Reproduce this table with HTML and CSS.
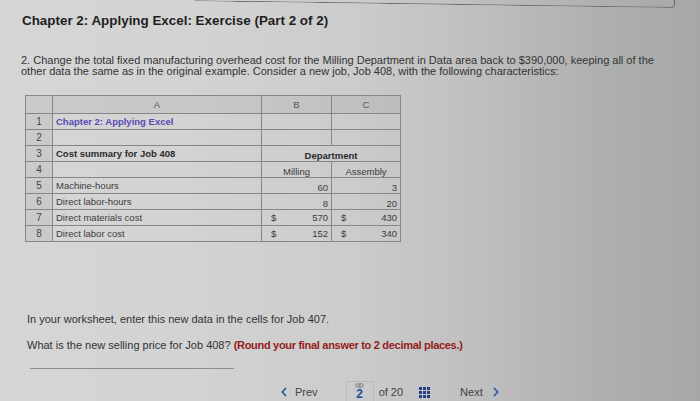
FILE: index.html
```html
<!DOCTYPE html>
<html lang="en">
<head>
<meta charset="utf-8">
<title>Chapter 2: Applying Excel: Exercise (Part 2 of 2)</title>
<link rel="stylesheet" href="styles.css">
</head>
<body>
<div class="page">
  <div class="topbox"></div>
  <h1 class="title">Chapter 2: Applying Excel: Exercise (Part 2 of 2)</h1>
  <p class="intro">2. Change the total fixed manufacturing overhead cost for the Milling Department in Data area back to $390,000, keeping all of the<br>other data the same as in the original example. Consider a new job, Job 408, with the following characteristics:</p>

  <table class="sheet">
    <colgroup>
      <col class="c-num"><col class="c-a"><col class="c-b"><col class="c-c">
    </colgroup>
    <thead>
      <tr class="hdr"><th></th><th>A</th><th>B</th><th>C</th></tr>
    </thead>
    <tbody>
      <tr><td class="rn">1</td><td class="heading">Chapter 2: Applying Excel</td><td></td><td></td></tr>
      <tr><td class="rn">2</td><td></td><td></td><td></td></tr>
      <tr><td class="rn">3</td><td class="bold">Cost summary for Job 408</td><td class="dept" colspan="2">Department</td></tr>
      <tr><td class="rn">4</td><td></td><td class="ctr">Milling</td><td class="ctr">Assembly</td></tr>
      <tr><td class="rn">5</td><td>Machine-hours</td><td class="num">60</td><td class="num">3</td></tr>
      <tr><td class="rn">6</td><td>Direct labor-hours</td><td class="num">8</td><td class="num">20</td></tr>
      <tr><td class="rn">7</td><td>Direct materials cost</td><td><div class="money"><span>$</span><span>570</span></div></td><td><div class="money"><span>$</span><span>430</span></div></td></tr>
      <tr><td class="rn">8</td><td>Direct labor cost</td><td><div class="money"><span>$</span><span>152</span></div></td><td><div class="money"><span>$</span><span>340</span></div></td></tr>
    </tbody>
  </table>

  <p class="note">In your worksheet, enter this new data in the cells for Job 407.</p>
  <p class="question">What is the new selling price for Job 408? <strong class="hint">(Round your final answer to 2 decimal places.)</strong></p>
  <div class="answer"></div>

  <nav class="pager">
    <span class="chev">
      <svg width="6" height="10" viewBox="0 0 6 10"><polyline points="5,1 1.4,5 5,9" fill="none" stroke="#2c5ca6" stroke-width="1.8"/></svg>
    </span>
    <span class="prev">Prev</span>
    <span class="pagebox">
      <svg class="link" width="9" height="5" viewBox="0 0 9 5"><ellipse cx="3" cy="2.5" rx="2.3" ry="1.8" fill="none" stroke="#777" stroke-width="0.9"/><ellipse cx="6" cy="2.5" rx="2.3" ry="1.8" fill="none" stroke="#777" stroke-width="0.9"/></svg>
      <span class="cur">2</span>
    </span>
    <span class="of">of 20</span>
    <span class="grid">
      <svg width="11" height="11" viewBox="0 0 11 11" fill="#253f86">
        <rect x="0" y="0" width="3" height="3"/><rect x="4" y="0" width="3" height="3"/><rect x="8" y="0" width="3" height="3"/>
        <rect x="0" y="4" width="3" height="3"/><rect x="4" y="4" width="3" height="3"/><rect x="8" y="4" width="3" height="3"/>
        <rect x="0" y="8" width="3" height="3"/><rect x="4" y="8" width="3" height="3"/><rect x="8" y="8" width="3" height="3"/>
      </svg>
    </span>
    <span class="next">Next</span>
    <span class="chev">
      <svg width="6" height="10" viewBox="0 0 6 10"><polyline points="1,1 4.6,5 1,9" fill="none" stroke="#2c5ca6" stroke-width="1.8"/></svg>
    </span>
  </nav>
</div>
</body>
</html>
```
FILE: styles.css
```css
* { box-sizing: border-box; }
html, body { margin: 0; padding: 0; }
body {
  width: 700px;
  height: 401px;
  overflow: hidden;
  font-family: "Liberation Sans", Arial, sans-serif;
  color: #303030;
  background: linear-gradient(90deg, #d6d6d6 0%, #d2d2d2 30%, #cccccc 50%, #bebfbe 68%, #aeb0af 86%, #a6a8a7 100%);
}
.page { padding-left: 21px; }

.topbox {
  margin-left: 174px;
  width: 480px;
  height: 8px;
  border-right: 1px solid #666;
  border-bottom: 1px solid #6c6c6c;
  border-bottom-right-radius: 4px;
  transform: rotate(0.8deg);
  transform-origin: 100% 100%;
}

.title {
  margin: 5px 0 0 1px;
  font-size: 13.4px;
  line-height: 16px;
  font-weight: 700;
  color: #1f1f1f;
}

.intro {
  margin: 26px 0 0;
  font-size: 11px;
  line-height: 10.5px;
  color: #333;
}

.sheet {
  margin: 19px 0 0 4px;
  border-collapse: collapse;
  table-layout: fixed;
  width: 375px;
  font-size: 9.5px;
  color: #3b3b3b;
}
.c-num { width: 27px; }
.c-a { width: 209px; }
.c-b { width: 70px; }
.c-c { width: 69px; }
.sheet th, .sheet td {
  border: 1px solid #878787;
  height: 16px;
  padding: 0 3px;
  line-height: 11px;
  white-space: nowrap;
  overflow: hidden;
}
.sheet .hdr th {
  height: 18px;
  font-weight: 400;
  color: #555;
  text-align: center;
  background: rgba(0, 0, 0, 0.05);
}
.sheet .rn {
  text-align: center;
  font-size: 10px;
  color: #444;
  background: rgba(0, 0, 0, 0.05);
}
.sheet .heading { font-weight: 700; color: #5a4cb4; }
.sheet .bold { font-weight: 700; color: #2a2a2a; }
.sheet .dept { font-weight: 700; text-align: center; vertical-align: bottom; color: #2a2a2a; }
.sheet .ctr { text-align: center; vertical-align: bottom; }
.sheet .num { text-align: right; vertical-align: bottom; }
.money { display: flex; justify-content: space-between; padding-left: 6px; }

.note {
  margin: 72px 0 0 6px;
  font-size: 11px;
  line-height: 11px;
  color: #333;
}
.question {
  margin: 15px 0 0 6px;
  font-size: 11px;
  line-height: 11px;
  color: #333;
}
.hint { color: #941c1c; letter-spacing: -0.3px; }

.answer {
  margin: 17px 0 0 9px;
  width: 204px;
  border-top: 1px solid #8c8c8c;
}

.pager {
  margin: 12px 0 0 260px;
  height: 21px;
  display: flex;
  align-items: center;
  font-size: 11px;
  color: #444;
}
.chev { display: flex; align-items: center; }
.prev { margin-left: 8px; }
.pagebox {
  margin-left: 28px;
  width: 28px;
  height: 21px;
  border: 1px solid #b9b9b9;
  border-bottom: none;
  display: flex;
  flex-direction: column;
  align-items: center;
}
.link { display: block; margin-top: 1px; }
.cur { font-size: 12px; font-weight: 700; color: #1c4f9c; line-height: 13px; }
.of { margin-left: 5px; }
.grid { display: flex; margin-left: 16px; margin-top: 2px; }
.next { margin-left: 30px; }
.next + .chev { margin-left: 10px; }
```
